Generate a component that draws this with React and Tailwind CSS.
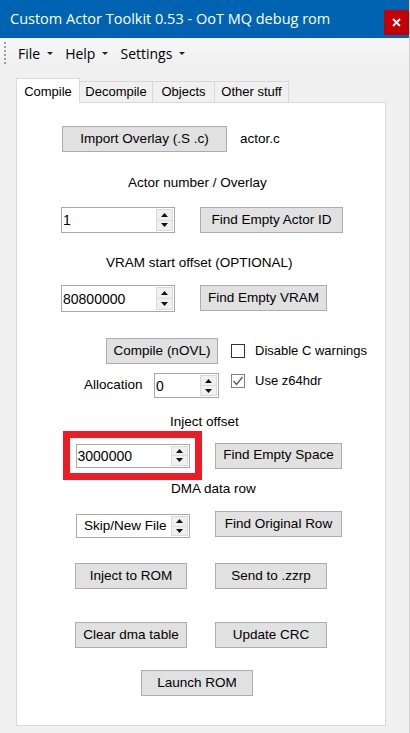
import React from 'react';

const ui = { fontFamily: '"Liberation Sans", Arial, sans-serif' };
const seg = { fontFamily: '"Open Sans", "Noto Sans", sans-serif' };

function Btn({ className = '', children }) {
  return (
    <div className={`h-[26px] flex items-center justify-center bg-[#e1e1e1] border border-[#adadad] text-[13.5px] text-black shrink-0 ${className}`}>
      {children}
    </div>
  );
}

function Arrow({ up }) {
  return (
    <svg width="7" height="4" viewBox="0 0 7 4">
      {up ? <polygon points="0,4 7,4 3.5,0" fill="#111" /> : <polygon points="0,0 7,0 3.5,4" fill="#111" />}
    </svg>
  );
}

function Spin({ className = '', value }) {
  return (
    <div className={`flex bg-white border border-[#a9a9a9] shrink-0 ${className}`}>
      <div className="flex-1 flex items-center pl-[1px] text-[14px] text-black leading-none">{value}</div>
      <div className="w-[18px] flex flex-col py-[1px] pr-[1px]">
        <div className="flex-1 flex items-center justify-center bg-[#f0f0f0] border border-[#dadada]">
          <Arrow up />
        </div>
        <div className="flex-1 flex items-center justify-center bg-[#f0f0f0] border border-t-0 border-[#dadada]">
          <Arrow />
        </div>
      </div>
    </div>
  );
}

function Check({ checked, label, className = '' }) {
  return (
    <div className={`flex items-center ${className}`}>
      <div className={`w-[14px] h-[14px] bg-white border flex items-center justify-center ${checked ? 'border-[#808080]' : 'border-[#333333]'}`}>
        {checked && (
          <svg width="12" height="12" viewBox="0 0 12 12">
            <polyline points="1.5,6 4.5,9.5 10.5,2" fill="none" stroke="#555" strokeWidth="1.3" />
          </svg>
        )}
      </div>
      <span className="ml-[10px] text-[13px] text-black">{label}</span>
    </div>
  );
}

function MenuItem({ children, className = '' }) {
  return (
    <div className={`flex items-center ${className}`}>
      <span className="text-[14px] text-black">{children}</span>
      <svg className="ml-[7px]" width="6" height="3" viewBox="0 0 6 3">
        <polygon points="0,0 6,0 3,3" fill="#222" />
      </svg>
    </div>
  );
}

export default function App() {
  return (
    <div className="w-[410px] h-[733px] bg-[#f0f0f0] overflow-hidden border-r border-[#cfcfcf]" style={ui}>
      {/* title bar */}
      <div className="h-[38px] bg-[#0063b1] flex items-start">
        <div className="h-[38px] flex items-center pl-[10px] text-white text-[14.5px]" style={seg}>
          Custom Actor Toolkit 0.53 - OoT MQ debug rom
        </div>
        <span className="ml-auto mt-[10px] w-[25px] h-[25px] shrink-0 bg-red-700 flex items-center justify-center">
          <svg width="9" height="9" viewBox="0 0 9 9">
            <path d="M1 1 L8 8 M8 1 L1 8" stroke="#ffffff" strokeWidth="1.8" />
          </svg>
        </span>
      </div>

      {/* menu strip */}
      <div className="h-[30px] flex items-center bg-gradient-to-b from-[#f7f7f7] to-[#efefef]" style={seg}>
        <div className="ml-[4px] flex flex-col gap-[2px] self-center">
          {[0, 1, 2, 3, 4, 5].map((i) => (
            <div key={i} className="w-[2px] h-[2px] bg-[#a0a0a0]" />
          ))}
        </div>
        <MenuItem className="ml-[12px]">File</MenuItem>
        <MenuItem className="ml-[12px]">Help</MenuItem>
        <MenuItem className="ml-[12px]">Settings</MenuItem>
      </div>

      {/* tabs */}
      <div className="mt-[10px] pl-[16px] flex items-end h-[25px] text-[13px] text-black">
        <div className="relative z-10 w-[64px] h-[25px] bg-white border border-b-0 border-[#d9d9d9] flex justify-center pt-[3px]">
          Compile
        </div>
        <div className="w-[73px] h-[22px] bg-[#f0f0f0] border border-l-0 border-[#d9d9d9] flex items-center justify-center">Decompile</div>
        <div className="w-[62px] h-[22px] bg-[#f0f0f0] border border-l-0 border-[#d9d9d9] flex items-center justify-center">Objects</div>
        <div className="w-[74px] h-[22px] bg-[#f0f0f0] border border-l-0 border-[#d9d9d9] flex items-center justify-center">Other stuff</div>
      </div>

      {/* panel */}
      <div className="-mt-px ml-[16px] w-[370px] h-[624px] bg-white border border-[#d9d9d9] flex flex-col text-[13.5px] text-black">
        <div className="mt-[23px] flex items-center">
          <Btn className="ml-[45px] w-[165px]">Import Overlay (.S .c)</Btn>
          <span className="ml-[13px]">actor.c</span>
        </div>

        <div className="mt-[23px] pl-[111px] leading-[16px]">Actor number / Overlay</div>

        <div className="mt-[16px] flex items-center">
          <Spin className="ml-[44px] w-[114px] h-[26px]" value="1" />
          <Btn className="ml-[25px] w-[143px]">Find Empty Actor ID</Btn>
        </div>

        <div className="mt-[22px] pl-[89px] leading-[16px]">VRAM start offset (OPTIONAL)</div>

        <div className="mt-[14px] flex items-start">
          <Spin className="ml-[44px] w-[114px] h-[27px]" value="80800000" />
          <Btn className="ml-[25px] w-[127px]">Find Empty VRAM</Btn>
        </div>

        <div className="mt-[26px] flex items-center">
          <Btn className="ml-[89px] w-[112px]">Compile (nOVL)</Btn>
          <Check className="ml-[13px]" label="Disable C warnings" />
        </div>

        <div className="mt-[7px] flex items-start">
          <div className="mt-[2px] ml-[67px] w-[70px] h-[25px] flex items-center">Allocation</div>
          <Spin className="mt-[2px] w-[65px] h-[25px]" value="0" />
          <Check className="ml-[12px]" checked label="Use z64hdr" />
        </div>

        <div className="mt-[16px] pl-[153px] leading-[16px]">Inject offset</div>

        <div className="mt-[1px] flex items-center">
          <div className="ml-[46px] w-[139px] h-[49px] border-[7px] border-[#ed1c24] flex items-center justify-center">
            <Spin className="w-[114px] h-[24px]" value="3000000" />
          </div>
          <Btn className="ml-[13px] w-[127px]">Find Empty Space</Btn>
        </div>

        <div className="mt-[1px] pl-[154px] leading-[16px]">DMA data row</div>

        <div className="mt-[14px] flex items-start">
          <Spin className="mt-[3px] ml-[59px] w-[114px] h-[24px]" value={<span className="text-[13.5px] pl-[6px]">Skip/New File</span>} />
          <Btn className="ml-[25px] w-[127px]">Find Original Row</Btn>
        </div>

        <div className="mt-[25px] flex items-center">
          <Btn className="ml-[58px] w-[112px]">Inject to ROM</Btn>
          <Btn className="ml-[28px] w-[112px]">Send to .zzrp</Btn>
        </div>

        <div className="mt-[33px] flex items-center">
          <Btn className="ml-[58px] w-[112px]">Clear dma table</Btn>
          <Btn className="ml-[28px] w-[112px]">Update CRC</Btn>
        </div>

        <div className="mt-[22px] flex items-center">
          <Btn className="ml-[124px] w-[112px]">Launch ROM</Btn>
        </div>
      </div>
    </div>
  );
}
